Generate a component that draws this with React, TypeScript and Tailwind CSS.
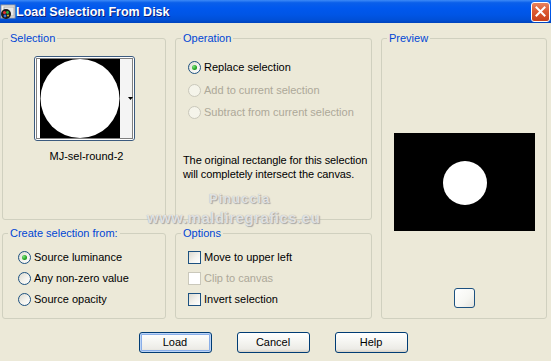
import React from "react";

const font = { fontFamily: '"Liberation Sans", Arial, sans-serif' };

function Radio({ checked = false, disabled = false, label }: { checked?: boolean; disabled?: boolean; label: string }) {
  return (
    <div className="flex h-[21px] items-center">
      <div
        className={
          "relative h-[13px] w-[13px] rounded-full border " +
          (disabled
            ? "border-[#CAC8BB] bg-[#F5F4EA]"
            : "border-[#1C5180] bg-[linear-gradient(135deg,#DCDAD0_0%,#F4F3EE_55%,#FFFFFF_100%)]")
        }
      >
        {checked && (
          <div className="absolute left-[3px] top-[3px] h-[5px] w-[5px] rounded-full bg-[radial-gradient(circle_at_35%_35%,#7BE37B_0%,#21A121_60%,#1A8A1A_100%)]" />
        )}
      </div>
      <span className={"ml-[3px] whitespace-nowrap text-[11px] leading-[13px] " + (disabled ? "text-[#ACA899]" : "text-black")}>{label}</span>
    </div>
  );
}

function Check({ disabled = false, label }: { disabled?: boolean; label: string }) {
  return (
    <div className="flex h-[21px] items-center">
      <div
        className={
          "h-[13px] w-[13px] border " +
          (disabled
            ? "border-[#CAC8BB] bg-white"
            : "border-[#1C5180] bg-[linear-gradient(135deg,#DCDAD0_0%,#F4F3EE_55%,#FFFFFF_100%)]")
        }
      />
      <span className={"ml-[3px] whitespace-nowrap text-[11px] leading-[13px] " + (disabled ? "text-[#ACA899]" : "text-black")}>{label}</span>
    </div>
  );
}

function Group({ title, children, className = "" }: { title: string; children?: React.ReactNode; className?: string }) {
  return (
    <fieldset className={"h-full min-w-0 rounded-[3px] border border-[#D0D0BF] " + className}>
      <legend className="ml-[5px] px-[2px] text-[11px] leading-[12px] text-[#0046D5]">{title}</legend>
      {children}
    </fieldset>
  );
}

function Button({ label, def = false }: { label: string; def?: boolean }) {
  return (
    <div
      className={
        "flex h-[21px] w-[73px] items-center justify-center rounded-[3px] border border-[#003C74] text-[11px] text-black bg-[linear-gradient(180deg,#FFFFFF_0%,#F4F4F0_50%,#ECEBE6_85%,#D6D0C5_100%)] " +
        (def ? "shadow-[inset_0_0_0_1px_#BCD4F6,inset_0_0_0_2px_#89AEE8]" : "")
      }
    >
      {label}
    </div>
  );
}

export default function App() {
  return (
    <div className="relative h-[361px] w-[551px] overflow-hidden bg-[#ECE9D8]" style={font}>
      {/* Title bar */}
      <div className="flex h-[23px] items-center bg-[linear-gradient(180deg,#3D8AF7_0%,#0A5FEA_12%,#0058EE_35%,#0055E5_65%,#0050D8_85%,#0043BC_100%)]">
        <svg width="16" height="16" viewBox="0 0 16 16">
          <rect x="1" y="1" width="14" height="13" fill="#F2F2F2" stroke="#9A9A9A" />
          <rect x="4" y="3" width="10" height="9" fill="#E8E8E8" stroke="#B0B0B0" />
          <circle cx="6" cy="10" r="5" fill="#1A1A1A" />
          <circle cx="4.5" cy="8.5" r="1.6" fill="#E03030" />
          <circle cx="7.5" cy="8.5" r="1.4" fill="#30B040" />
          <circle cx="5" cy="12" r="1.4" fill="#3070E0" />
          <circle cx="8" cy="11.5" r="1" fill="#E0C030" />
        </svg>
        <span className="text-[12.5px] font-bold leading-[16px] text-white [text-shadow:1px_1px_0_#0A1E7A]">
          Load Selection From Disk
        </span>
        <div className="ml-auto mr-[1px] flex h-[20px] w-[19px] items-center justify-center rounded-[3px] border border-white bg-[linear-gradient(180deg,#E8835F_0%,#DC5A32_45%,#C8401A_100%)]">
          <svg width="11" height="11" viewBox="0 0 11 11">
            <path d="M1.5 1.5 L9.5 9.5 M9.5 1.5 L1.5 9.5" stroke="white" strokeWidth="2" strokeLinecap="square" />
          </svg>
        </div>
      </div>

      {/* Body */}
      <div className="pl-[2px] pt-[9px]">
        <div className="grid grid-cols-[164px_197px_166px] grid-rows-[188px_92px] gap-x-[9px] gap-y-[7px]">
          <Group title="Selection">
            <div className="flex flex-col items-center">
              <div className="mt-[12px] h-[85px] w-[101px] rounded-[3px] border border-[#3B5A7E] bg-white">
                <svg width="99" height="83" viewBox="0 0 99 83">
                  <rect x="5" y="2" width="80" height="79" fill="#000" />
                  <rect x="85" y="2" width="12" height="79" fill="#F4F4F4" />
                  <circle cx="45" cy="41.5" r="39.5" fill="#fff" />
                  <rect x="1.5" y="1.5" width="96" height="80" fill="none" stroke="#000" strokeDasharray="1 1" />
                  <path d="M93 40 L98 40 L95.5 43 Z" fill="#000" />
                </svg>
              </div>
              <div className="ml-[5px] mt-[9px] text-[11px] leading-[13px] text-black">MJ-sel-round-2</div>
            </div>
          </Group>

          <Group title="Operation">
            <div className="pl-[12px] pt-[13px]">
              <div className="flex flex-col gap-[1.5px]">
                <Radio checked label="Replace selection" />
                <Radio disabled label="Add to current selection" />
                <Radio disabled label="Subtract from current selection" />
              </div>
            </div>
            <div className="mt-[30px] whitespace-nowrap pl-[7px] text-[11px] leading-[14px] tracking-[-0.1px] text-black">
              The original rectangle for this selection
              <br />
              will completely intersect the canvas.
            </div>
          </Group>

          <Group title="Preview" className="row-span-2">
            <div className="flex flex-col items-center">
              <div className="mt-[89px] flex h-[98px] w-[141px] items-center justify-center bg-black">
                <div className="ml-[1px] mt-[2px] h-[44px] w-[44px] rounded-full bg-white" />
              </div>
              <div className="mt-[57px] h-[20px] w-[21px] rounded-[3px] border border-[#1C5180] bg-[linear-gradient(135deg,#FFFFFF_0%,#F6F6F2_60%,#E4E3DC_100%)]" />
            </div>
          </Group>

          <Group title="Create selection from:">
            <div className="pl-[15px] pt-[8px]">
              <Radio checked label="Source luminance" />
              <Radio label="Any non-zero value" />
              <Radio label="Source opacity" />
            </div>
          </Group>

          <Group title="Options">
            <div className="pl-[12px] pt-[8px]">
              <Check label="Move to upper left" />
              <Check disabled label="Clip to canvas" />
              <Check label="Invert selection" />
            </div>
          </Group>
        </div>

        <div className="mt-[13px] flex justify-center gap-[25px] pr-[7px]">
          <Button label="Load" def />
          <Button label="Cancel" />
          <Button label="Help" />
        </div>
      </div>

      {/* Watermark */}
      <div className="pointer-events-none absolute left-[209px] top-[191px] text-[13px] font-bold leading-[15px] tracking-[1px] text-white/70 [text-shadow:0_0_1px_#9a9a9a,1px_1px_1px_#a8a8a8]">
        Pinuccia
      </div>
      <div className="pointer-events-none absolute left-[147px] top-[210px] text-[15px] font-bold leading-[16px] tracking-[0.5px] text-white/70 [text-shadow:0_0_1px_#9a9a9a,1px_1px_1px_#a8a8a8]">
        www.maldiregrafics.eu
      </div>
    </div>
  );
}
